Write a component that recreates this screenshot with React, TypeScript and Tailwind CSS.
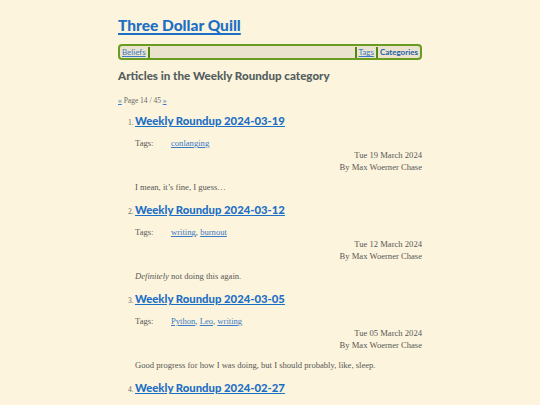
const heading = { fontFamily: '"Lato", "Roboto", sans-serif' };
const body = { fontFamily: '"Liberation Serif", "DejaVu Serif", serif' };

interface Article {
  title: string;
  tags: string[];
  date: string;
  summary: React.ReactNode;
}

const articles: Article[] = [
  { title: 'Weekly Roundup 2024-03-19', tags: ['conlanging'], date: 'Tue 19 March 2024', summary: 'I mean, it\u2019s fine, I guess\u2026' },
  {
    title: 'Weekly Roundup 2024-03-12',
    tags: ['writing', 'burnout'],
    date: 'Tue 12 March 2024',
    summary: (
      <>
        <em>Definitely</em> not doing this again.
      </>
    ),
  },
  {
    title: 'Weekly Roundup 2024-03-05',
    tags: ['Python', 'Leo', 'writing'],
    date: 'Tue 05 March 2024',
    summary: 'Good progress for how I was doing, but I should probably, like, sleep.',
  },
  { title: 'Weekly Roundup 2024-02-27', tags: ['writing'], date: 'Tue 27 February 2024', summary: 'Slow week.' },
];

function Sep() {
  return <span className="inline-block w-[2px] h-[11px] bg-[#4f8a10] mx-[2px]" />;
}

export default function App() {
  return (
    <div className="min-h-screen bg-[#fcf4dc] text-[#575757]">
      <div className="w-[304px] mx-auto pt-[13px]">
        <h1 style={heading} className="text-[15.5px] font-black leading-[24px]">
          <a className="text-[#1c6fc6] underline decoration-[1.5px] underline-offset-2">Three Dollar Quill</a>
        </h1>
        <nav
          style={heading}
          className="mt-[7px] flex items-center h-[16px] px-[2px] border-2 border-[#6a9c22] rounded-[4px] bg-[#ebe3cd] text-[8px]"
        >
          <a className="text-[#3a7bc8] underline">Beliefs</a>
          <Sep />
          <span className="flex-1" />
          <Sep />
          <a className="text-[#3a7bc8] underline">Tags</a>
          <Sep />
          <a className="text-[#1c5fa8] font-bold">Categories</a>
        </nav>
        <h2 style={heading} className="mt-[7px] text-[11.6px] font-black text-[#545e60] leading-[18px]">
          Articles in the Weekly Roundup category
        </h2>
        <p style={body} className="mt-[10px] text-[7.5px] text-[#6a6a6a]">
          <a className="text-[#3a7bc8] underline">«</a> Page 14 / 45 <a className="text-[#3a7bc8] underline">»</a>
        </p>
        <ol className="mt-[6px] pl-[17px]">
          {articles.map((a, i) => (
            <li key={a.title} className="h-[89px]">
              <div className="flex items-baseline">
                <span style={body} className="w-[7px] -ml-[7px] text-[7.5px] text-[#6a6a6a]">
                  {i + 1}.
                </span>
                <a style={heading} className="text-[11.3px] font-black text-[#1c6fc6] underline leading-[18px]">
                  {a.title}
                </a>
              </div>
              <div style={body} className="text-[8.6px] leading-[12px]">
                <div className="mt-[7px] flex">
                  <span className="w-[36px]">Tags:</span>
                  <span>
                    {a.tags.map((t, j) => (
                      <span key={t}>
                        <a className="text-[#3a7bc8] underline">{t}</a>
                        {j < a.tags.length - 1 ? ', ' : ''}
                      </span>
                    ))}
                  </span>
                </div>
                <div className="text-right">{a.date}</div>
                <div className="text-right">By Max Woerner Chase</div>
                <p className="mt-[8px]">{a.summary}</p>
              </div>
            </li>
          ))}
        </ol>
      </div>
    </div>
  );
}
